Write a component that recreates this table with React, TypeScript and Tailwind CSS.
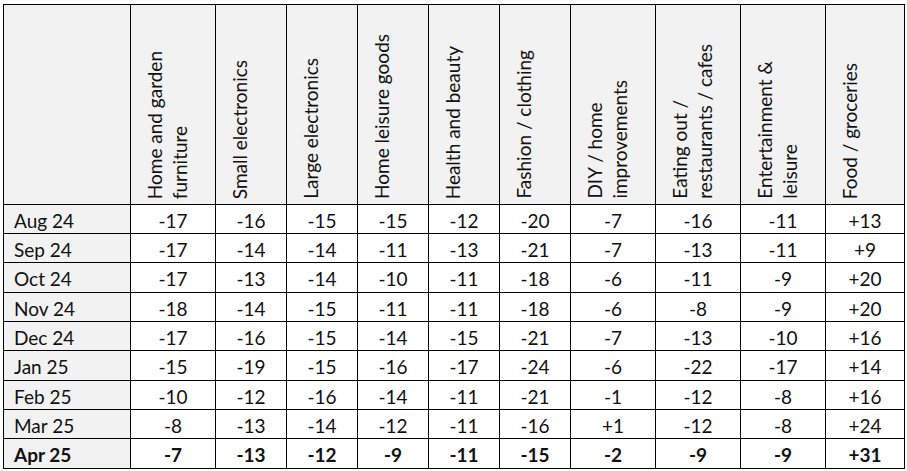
const headers = [
  ["Home and garden", "furniture"],
  ["Small electronics"],
  ["Large electronics"],
  ["Home leisure goods"],
  ["Health and beauty"],
  ["Fashion / clothing"],
  ["DIY / home", "improvements"],
  ["Eating out /", "restaurants / cafes"],
  ["Entertainment &", "leisure"],
  ["Food / groceries"],
];

const colWidths = ["w-[127px]", "w-[85px]", "w-[71px]", "w-[71px]", "w-[71px]", "w-[71px]", "w-[71px]", "w-[85px]", "w-[85px]", "w-[85px]", "w-[79px]"];

const rows: [string, string[], string][] = [
  ["Aug 24", ["-17", "-16", "-15", "-15", "-12", "-20", "-7", "-16", "-11", "+13"], "h-[29px]"],
  ["Sep 24", ["-17", "-14", "-14", "-11", "-13", "-21", "-7", "-13", "-11", "+9"], "h-[29px]"],
  ["Oct 24", ["-17", "-13", "-14", "-10", "-11", "-18", "-6", "-11", "-9", "+20"], "h-[30px]"],
  ["Nov 24", ["-18", "-14", "-15", "-11", "-11", "-18", "-6", "-8", "-9", "+20"], "h-[29px]"],
  ["Dec 24", ["-17", "-16", "-15", "-14", "-15", "-21", "-7", "-13", "-10", "+16"], "h-[29px]"],
  ["Jan 25", ["-15", "-19", "-15", "-16", "-17", "-24", "-6", "-22", "-17", "+14"], "h-[30px]"],
  ["Feb 25", ["-10", "-12", "-16", "-14", "-11", "-21", "-1", "-12", "-8", "+16"], "h-[29px]"],
  ["Mar 25", ["-8", "-13", "-14", "-12", "-11", "-16", "+1", "-12", "-8", "+24"], "h-[29px]"],
  ["Apr 25", ["-7", "-13", "-12", "-9", "-11", "-15", "-2", "-9", "-9", "+31"], "h-[30px]"],
];

export default function App() {
  return (
    <div className="w-[907px] h-[471px] bg-white pl-[3px] pt-[4px] font-['Lato','Open_Sans',sans-serif] text-[19px] text-[#111]">
      <table className="table-fixed border-collapse w-[901px]">
        <colgroup>
          {colWidths.map((w, i) => (
            <col key={i} className={w} />
          ))}
        </colgroup>
        <thead>
          <tr className="h-[200px]">
            <th className="border border-black bg-[#f2f2f2]" />
            {headers.map((lines, i) => (
              <th key={i} className="border border-black bg-[#f2f2f2] align-bottom text-left p-0">
                <div className="flex pl-[11px] pb-[5px]">
                  <div className="[writing-mode:vertical-rl] rotate-180 font-normal leading-[25px] text-left whitespace-nowrap">
                    {lines.map((l, j) => (
                      <div key={j}>{l}</div>
                    ))}
                  </div>
                </div>
              </th>
            ))}
          </tr>
        </thead>
        <tbody>
          {rows.map(([label, vals, h], r) => {
            const bold = r === rows.length - 1;
            return (
              <tr key={label} className={`${h} ${bold ? "font-bold" : ""}`}>
                <td className="border border-black bg-[#f2f2f2] pl-[10px] pt-[2px] leading-none">{label}</td>
                {vals.map((v, i) => (
                  <td key={i} className="border border-black text-center pt-[2px] leading-none">
                    {v}
                  </td>
                ))}
              </tr>
            );
          })}
        </tbody>
      </table>
    </div>
  );
}
